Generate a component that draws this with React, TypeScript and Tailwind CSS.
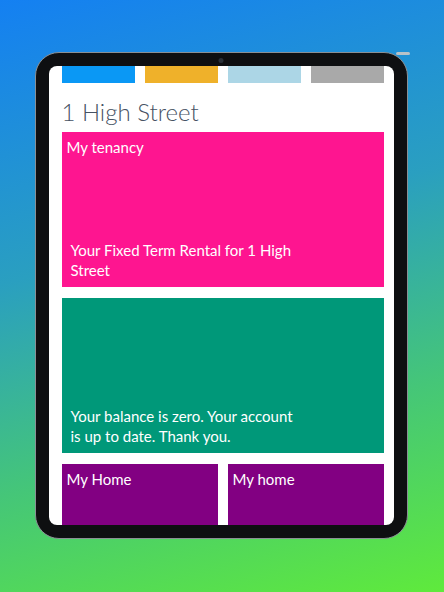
const font = { fontFamily: "Lato, 'Noto Sans', sans-serif" };

function Tile({
  title,
  body,
  color,
  tall = true,
}: {
  title?: string;
  body?: string;
  color: string;
  tall?: boolean;
}) {
  return (
    <div className={`${color} flex flex-col justify-between text-white ${tall ? "h-[155px]" : "h-[80px]"}`}>
      <div className="px-[5px] pt-[6px] text-[15px] leading-[18px]">{title}</div>
      {body && (
        <div className="w-[236px] pb-[7px] pl-[9px] text-[15px] leading-[20px]">{body}</div>
      )}
    </div>
  );
}

export default function App() {
  return (
    <div
      className="flex h-[592px] w-[444px] items-start justify-center overflow-hidden bg-[linear-gradient(165deg,#1480f2_0%,#2a9fc0_40%,#45c678_70%,#5fea3c_100%)] pt-[52px]"
      style={font}
    >
      {/* tablet */}
      <div className="relative ml-[-2px] h-[487px] w-[373px] rounded-[24px] border border-[#8a8f94] bg-[#0e0f11] p-[13px]">
        <div className="absolute left-1/2 top-[5px] h-[5px] w-[5px] -translate-x-1/2 rounded-full bg-[#2a3038]" />
        <div className="absolute right-[-3px] top-[-1px] h-[3px] w-[14px] rounded bg-[#b8c2c8]" />
        <div className="h-full w-full overflow-hidden rounded-[8px] bg-white pl-[13px] pr-[10px]">
          <div className="grid grid-cols-4 gap-[10px]">
            <div className="h-[17px] bg-[#0a98f5]" />
            <div className="h-[17px] bg-[#efb12a]" />
            <div className="h-[17px] bg-[#acd6e6]" />
            <div className="h-[17px] bg-[#a9a9a9]" />
          </div>
          <h1 className="mt-[14px] text-[24px] font-light leading-[30px] text-[#465263]">1 High Street</h1>
          <div className="mt-[5px] flex flex-col gap-[11px]">
            <Tile
              color="bg-[#fe1590]"
              title="My tenancy"
              body="Your Fixed Term Rental for 1 High Street"
            />
            <Tile
              color="bg-[#009879]"
              body="Your balance is zero. Your account is up to date. Thank you."
            />
            <div className="grid grid-cols-2 gap-[10px]">
              <Tile color="bg-[#820082]" title="My Home" tall={false} />
              <Tile color="bg-[#820082]" title="My home" tall={false} />
            </div>
          </div>
        </div>
      </div>
    </div>
  );
}
